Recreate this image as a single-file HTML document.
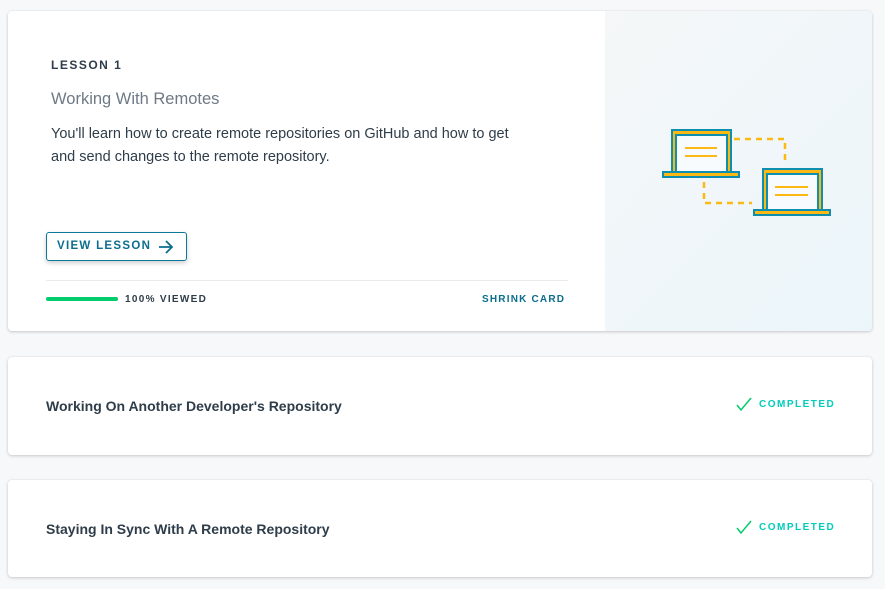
<!DOCTYPE html>
<html><head><meta charset="utf-8"><style>
*{box-sizing:border-box;margin:0;padding:0}
body{width:885px;height:589px;background:#f7f8fa;font-family:"Liberation Sans",sans-serif;position:relative;overflow:hidden}
.card{position:absolute;left:8px;width:864px;background:#fff;border-radius:4px;box-shadow:0 1px 3px rgba(0,0,0,.18),0 0 1px rgba(0,0,0,.12)}
.c1{top:11px;height:320px;overflow:hidden}
.panel{position:absolute;left:597px;top:0;width:267px;height:320px;background:linear-gradient(135deg,#f5f7f8,#ebf6fb)}
.lbl{position:absolute;left:43px;top:47px;font-size:12px;letter-spacing:1.5px;color:#2e3d49;font-weight:bold}
.title{position:absolute;left:43px;top:79px;font-size:16.5px;color:#6e7a86}
.desc{position:absolute;left:43px;top:112px;width:482px;font-size:14.5px;line-height:23px;color:#2e3d49}
.btn{position:absolute;left:38px;top:221px;width:141px;height:29px;border:1px solid #0b7a9a;border-radius:3px;box-shadow:0 2px 5px rgba(0,0,0,.2);font-size:11.5px;letter-spacing:1.3px;color:#0b6e8c;padding:7px 0 0 10px;font-weight:bold}
.btn svg{position:absolute;right:13px;top:7px}
.hr{position:absolute;left:38px;top:269px;width:522px;height:1px;background:#e8eaec}
.bar{position:absolute;left:38px;top:286px;width:72px;height:4px;border-radius:2px;background:#02cc6b}
.vw{position:absolute;left:117px;top:283px;font-size:10px;letter-spacing:1.3px;color:#2e3d49;font-weight:bold}
.sh{position:absolute;left:474px;top:283px;font-size:10px;letter-spacing:1.2px;color:#0b6e8c;font-weight:bold}
.row{height:98px}
.rt{position:absolute;left:38px;top:41px;font-size:14px;color:#2e3d49;font-weight:bold}
.done{position:absolute;left:728px;top:42px;font-size:10px;letter-spacing:1.5px;color:#02ccba;font-weight:bold}
.done svg{position:absolute;left:0;top:-2px}
.done span{margin-left:23px}
</style></head><body>
<div class="card c1">
<div class="lbl">LESSON 1</div>
<div class="title">Working With Remotes</div>
<div class="desc">You'll learn how to create remote repositories on GitHub and how to get and send changes to the remote repository.</div>
<div class="btn">VIEW LESSON<svg width="15" height="14" viewBox="0 0 15 14"><path d="M1 7H14M8 1L14 7L8 13" fill="none" stroke="#0b6e8c" stroke-width="1.8"/></svg></div>
<div class="hr"></div>
<div class="bar"></div>
<div class="vw">100% VIEWED</div>
<div class="sh">SHRINK CARD</div>
<div class="panel">
<svg width="267" height="320" viewBox="605 11 267 320" style="position:absolute;left:0;top:0">
<g fill="none" stroke="#fdb913" stroke-width="2.5" stroke-dasharray="6 5">
<path d="M734 139H785V162"/><path d="M704 182V203H752"/>
</g>
<rect x="671" y="129" width="61" height="43" fill="#0e8fb0"/>
<rect x="673" y="131" width="57" height="41" fill="#fdb913"/>
<rect x="675" y="134" width="53" height="38" fill="#0e8fb0"/>
<rect x="677" y="136" width="49" height="36" fill="#f7fbfd"/>
<path d="M685 148H717M685 156H717" stroke="#fdb913" stroke-width="2"/>
<rect x="662" y="171" width="78" height="7" fill="#0e8fb0"/>
<rect x="664" y="173" width="74" height="3" fill="#fdb913"/>
<rect x="762" y="168" width="61" height="43" fill="#0e8fb0"/>
<rect x="764" y="170" width="57" height="41" fill="#fdb913"/>
<rect x="766" y="173" width="53" height="38" fill="#0e8fb0"/>
<rect x="768" y="175" width="49" height="36" fill="#f7fbfd"/>
<path d="M775 187H808M775 195H808" stroke="#fdb913" stroke-width="2"/>
<rect x="753" y="209" width="78" height="7" fill="#0e8fb0"/>
<rect x="755" y="211" width="74" height="3" fill="#fdb913"/>
</svg>
</div>
</div>
<div class="card row" style="top:357px"><div class="rt">Working On Another Developer's Repository</div><div class="done"><svg width="16" height="15" viewBox="0 0 16 15"><path d="M1 8L5 13L15 1" fill="none" stroke="#02cc6b" stroke-width="1.5"/></svg><span>COMPLETED</span></div></div>
<div class="card row" style="top:480px;height:97px"><div class="rt">Staying In Sync With A Remote Repository</div><div class="done"><svg width="16" height="15" viewBox="0 0 16 15"><path d="M1 8L5 13L15 1" fill="none" stroke="#02cc6b" stroke-width="1.5"/></svg><span>COMPLETED</span></div></div>
</body></html>
